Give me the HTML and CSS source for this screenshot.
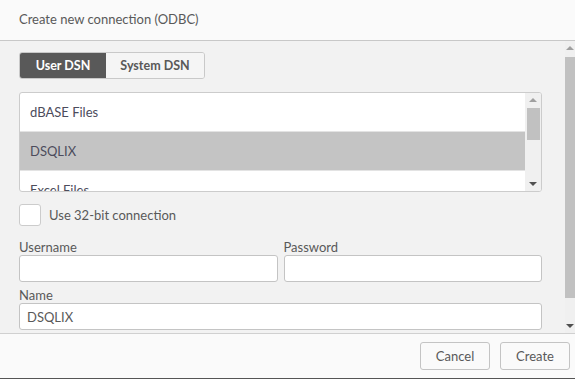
FILE: index.html
```html
<!DOCTYPE html>
<html lang="en">
<head>
    <meta charset="UTF-8">
    <title>Create new connection (ODBC)</title>
    <link rel="stylesheet" href="styles.css">
</head>
<body>
    <div class="dialog">
        <header class="dialog-header">Create new connection (ODBC)</header>
        <div class="dialog-body">
            <div class="content">
                <div class="tabs">
                    <button class="tab active">User DSN</button>
                    <button class="tab">System DSN</button>
                </div>

                <div class="dsn-list">
                    <ul class="items">
                        <li>dBASE Files</li>
                        <li class="selected">DSQLIX</li>
                        <li>Excel Files</li>
                    </ul>
                    <div class="scrollbar small">
                        <span class="arrow up"></span>
                        <div class="track"><div class="thumb"></div></div>
                        <span class="arrow down"></span>
                    </div>
                </div>

                <label class="check">
                    <span class="box"></span>
                    Use 32-bit connection
                </label>

                <div class="row">
                    <div class="field">
                        <label>Username</label>
                        <input type="text">
                    </div>
                    <div class="field">
                        <label>Password</label>
                        <input type="password">
                    </div>
                </div>
                <div class="field name">
                    <label>Name</label>
                    <input type="text" value="DSQLIX">
                </div>
            </div>
            <div class="scrollbar page">
                <span class="arrow up"></span>
                <div class="track"><div class="thumb"></div></div>
                <span class="arrow down"></span>
            </div>
        </div>
        <footer class="dialog-footer">
            <button class="btn">Cancel</button>
            <button class="btn">Create</button>
        </footer>
    </div>
</body>
</html>
```

FILE: styles.css
```css
body {
    margin: 0;
    font-family: 'Lato', 'Open Sans', sans-serif;
    color: #595959;
    background: #fff;
}
.dialog {
    width: 575px;
    height: 378px;
    display: flex;
    flex-direction: column;
    border-bottom: 1px solid #555;
    overflow: hidden;
}
.dialog-header {
    height: 40px;
    line-height: 38px;
    padding-left: 19px;
    font-size: 13px;
    background: #fafafa;
    border-bottom: 1px solid #c8c8c8;
}
.dialog-body {
    height: 292px;
    display: flex;
    background: #f2f2f2;
    border-bottom: 1px solid #d0d0d0;
}
.content {
    flex: 1;
    padding: 11px 23px 0 19px;
    overflow: hidden;
}
.tabs {
    display: flex;
    width: 186px;
    height: 27px;
    border: 1px solid #c9c9c9;
    border-radius: 3px;
    overflow: hidden;
    box-sizing: border-box;
}
.tab {
    border: none;
    font-family: inherit;
    font-size: 12.5px;
    font-weight: bold;
    color: #595959;
    background: #f5f5f5;
    padding: 0;
    flex: 1;
}
.tab.active {
    width: 86px;
    flex: none;
    background: #595959;
    color: #fff;
}
.dsn-list {
    display: flex;
    margin-top: 13px;
    height: 100px;
    background: #fff;
    border: 1px solid #ccc;
    border-radius: 3px;
    box-sizing: border-box;
    overflow: hidden;
}
.items {
    flex: 1;
    margin: 0;
    padding: 0;
    list-style: none;
    font-size: 13px;
    color: #4c4c5c;
}
.items li {
    height: 38px;
    line-height: 38px;
    padding-left: 10px;
    border-bottom: 1px solid #e3e3e3;
}
.items li.selected {
    background: #c4c4c4;
}
.scrollbar {
    display: flex;
    flex-direction: column;
    align-items: center;
    background: #f0f0f0;
}
.scrollbar.small {
    width: 16px;
}
.scrollbar.page {
    width: 10px;
    align-items: stretch;
}
.scrollbar .track {
    flex: 1;
    width: 100%;
    display: flex;
    justify-content: center;
}
.scrollbar.small .thumb {
    width: 13px;
    height: 32px;
    margin-top: 1px;
    background: #c1c1c1;
}
.scrollbar.page .thumb {
    width: 100%;
    height: 241px;
    margin-top: 2px;
    background: #c1c1c1;
}
.arrow {
    display: block;
    width: 0;
    height: 0;
    margin: 5px auto;
    border-left: 4px solid transparent;
    border-right: 4px solid transparent;
}
.arrow.up {
    border-bottom: 4px solid #a0a0a0;
}
.arrow.down {
    border-top: 4px solid #505050;
}
.check {
    display: flex;
    align-items: center;
    gap: 8px;
    margin-top: 12px;
    font-size: 13px;
}
.check .box {
    width: 22px;
    height: 22px;
    background: #fff;
    border: 1px solid #ccc;
    border-radius: 3px;
    box-sizing: border-box;
}
.row {
    display: flex;
    gap: 6px;
    margin-top: 13px;
}
.row .field {
    flex: 1;
}
.field label {
    display: block;
    font-size: 13px;
    height: 16px;
    line-height: 16px;
}
.field.name {
    margin-top: 5px;
}
.field input {
    width: 100%;
    height: 27px;
    box-sizing: border-box;
    border: 1px solid #c4c4c4;
    border-radius: 3px;
    background: #fff;
    font-family: inherit;
    font-size: 13px;
    color: #595959;
    padding: 0 7px;
    margin: 0;
}
.dialog-footer {
    flex: 1;
    display: flex;
    justify-content: flex-end;
    align-items: center;
    gap: 10px;
    padding-right: 5px;
    background: #fafafa;
}
.btn {
    width: 70px;
    height: 28px;
    border: 1px solid #c4c4c4;
    border-radius: 3px;
    background: #fafafa;
    font-family: inherit;
    font-size: 13px;
    color: #595959;
}
```
